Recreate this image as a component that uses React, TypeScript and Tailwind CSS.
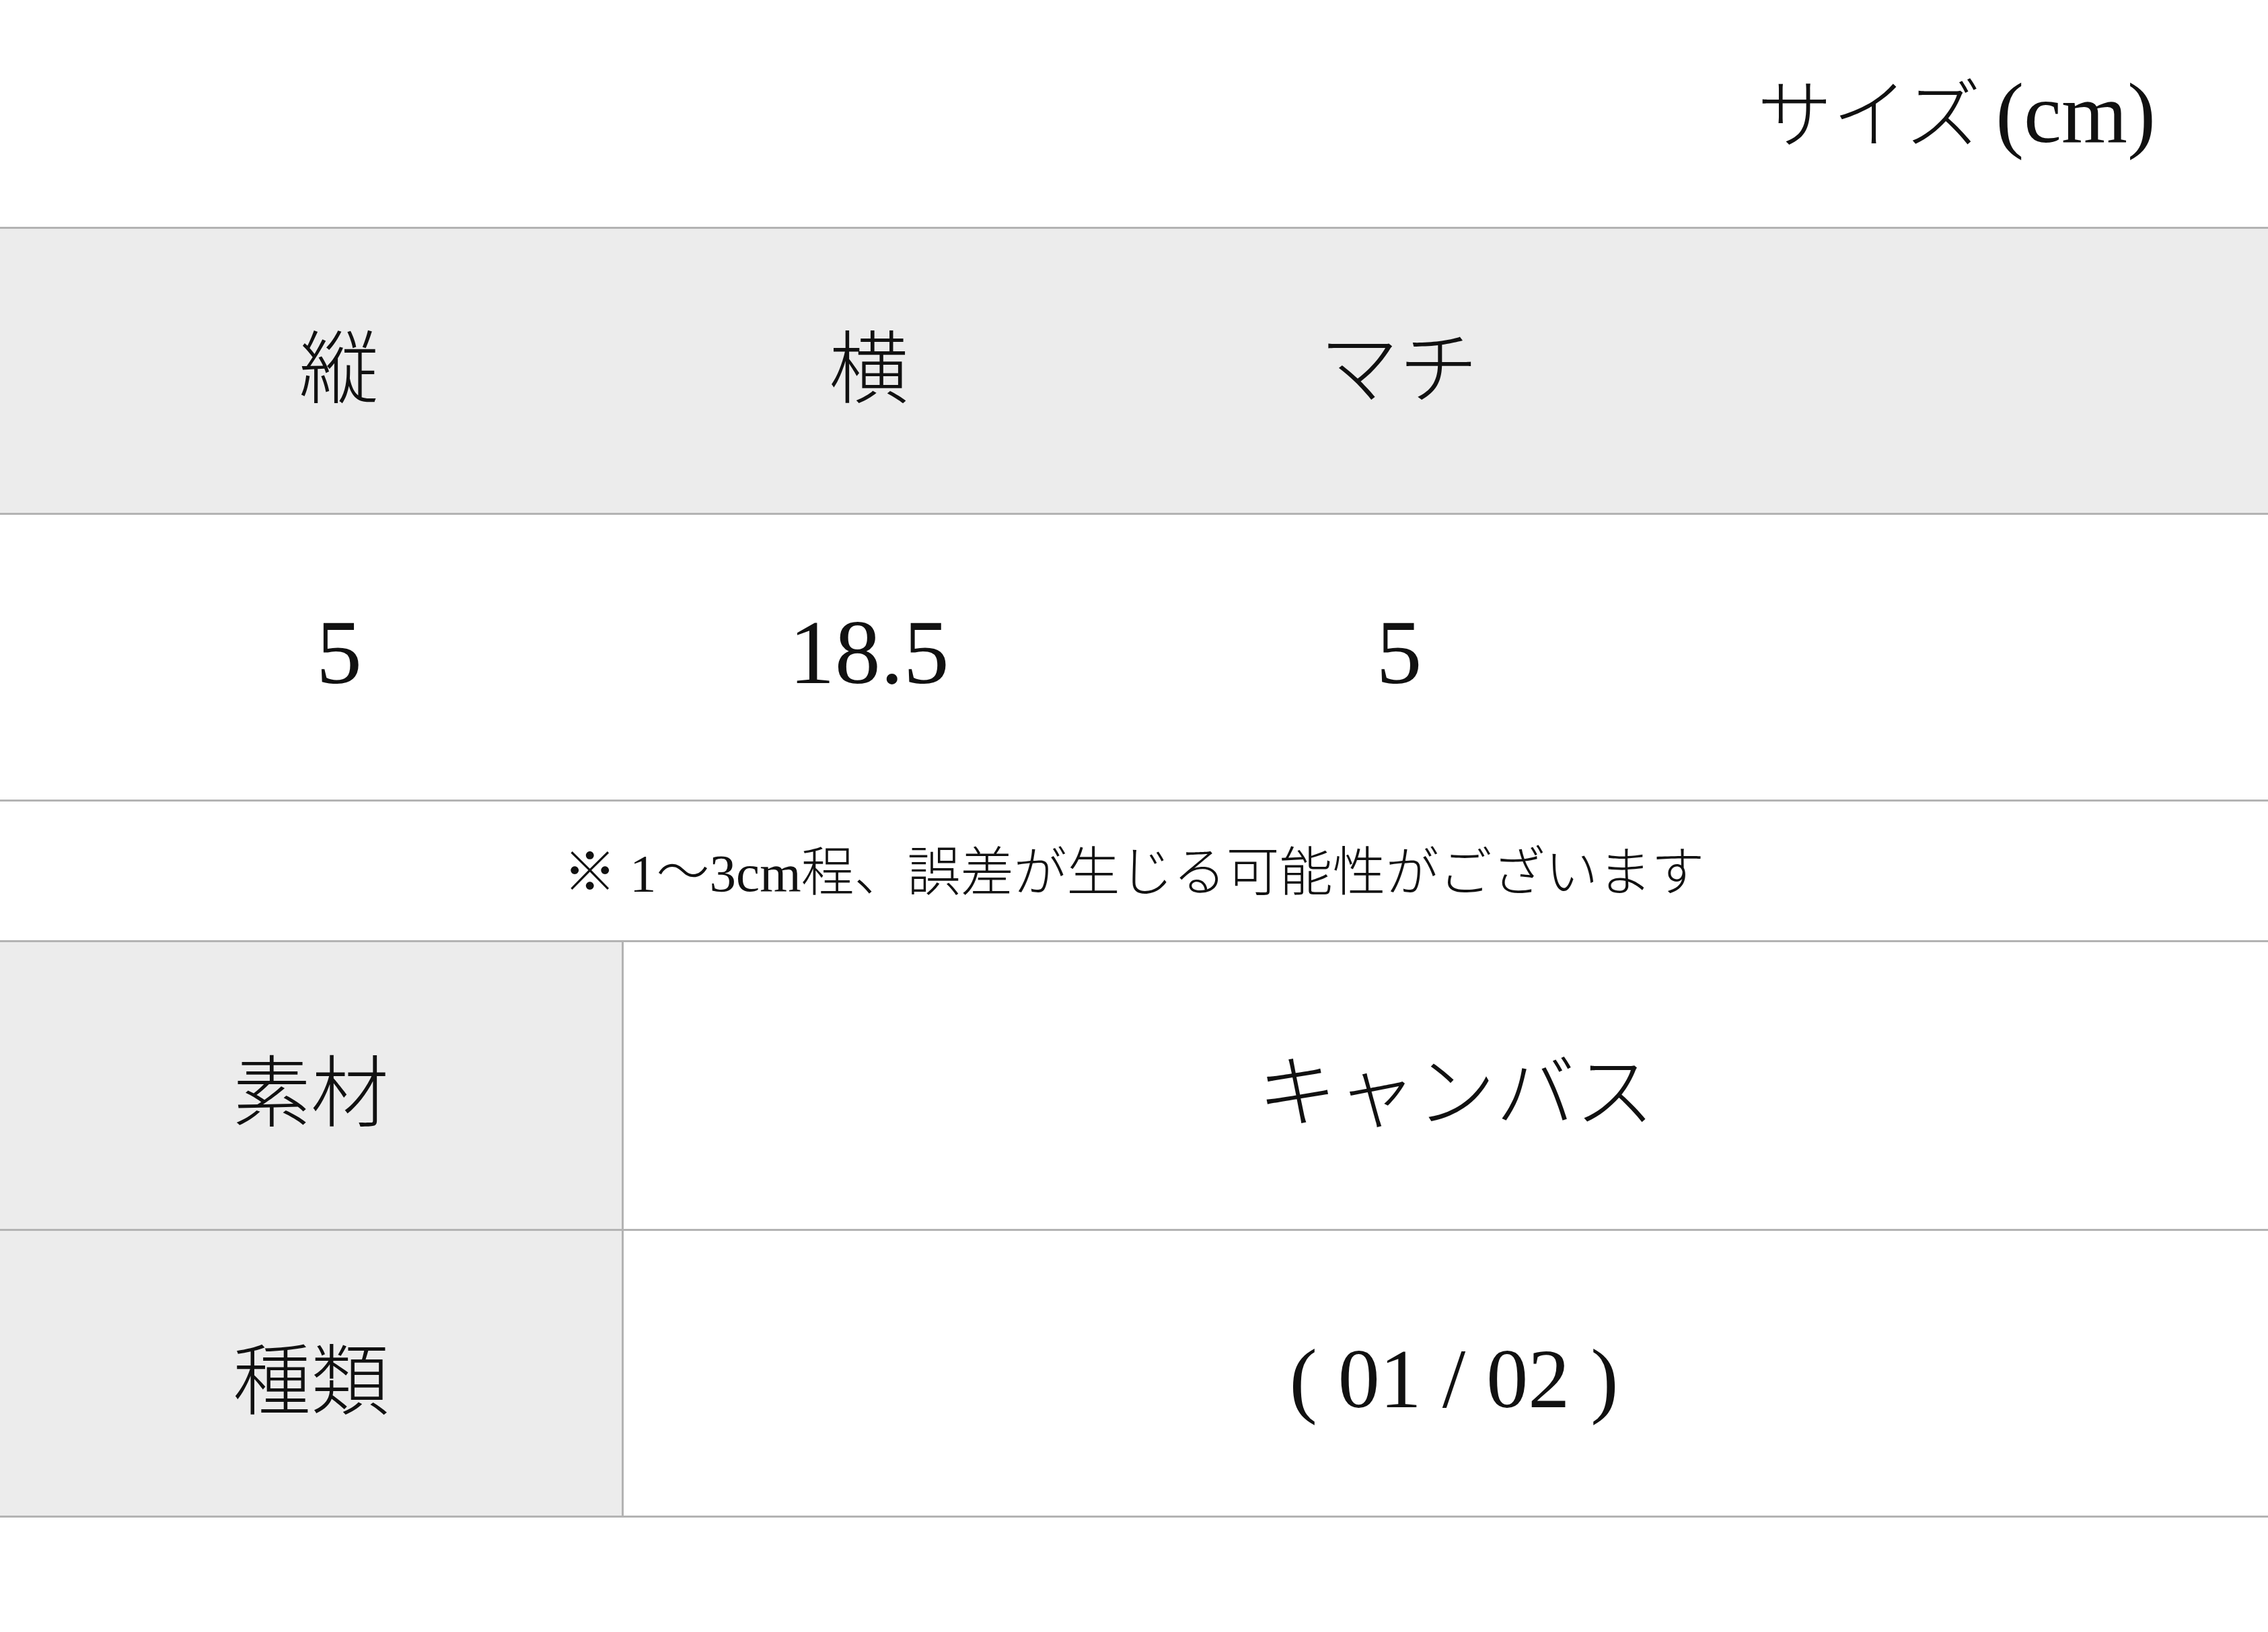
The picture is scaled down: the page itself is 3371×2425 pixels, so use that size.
const serif = "font-['Liberation_Serif','Noto_Sans_CJK_JP',serif]";

const headers = ["縦", "横", "マチ", ""];
const values = ["5", "18.5", "5", ""];

export default function App() {
  return (
    <div className={`w-[3371px] h-[2425px] bg-white text-[#111] ${serif}`}>
      {/* title */}
      <div className="h-[337px] flex items-center justify-end pr-[167px]">
        <span className="leading-none flex items-baseline gap-[22px]">
          <span className="text-[112px] font-light">サイズ</span>
          <span className="text-[126px]">(cm)</span>
        </span>
      </div>

      {/* size table */}
      <div className="border-t-[3px] border-[#b3b3b3] bg-[#ececec] h-[425px] grid grid-cols-4 px-[110px] items-center">
        {headers.map((h, i) => (
          <div key={i} className="text-center text-[118px] leading-none font-light">
            {h}
          </div>
        ))}
      </div>
      <div className="border-t-[3px] border-[#b3b3b3] h-[426px] grid grid-cols-4 px-[110px] items-center pb-[16px]">
        {values.map((v, i) => (
          <div key={i} className="text-center text-[136px] leading-none">
            {v}
          </div>
        ))}
      </div>
      <div className="border-t-[3px] border-[#b3b3b3] h-[209px] flex items-center justify-center pt-[6px]">
        <span className="text-[79px] leading-none font-light">
          ※ 1〜3cm程、誤差が生じる可能性がございます
        </span>
      </div>

      {/* detail table */}
      <div className="border-t-[3px] border-b-[3px] border-[#b3b3b3]">
        <div className="flex h-[426px]">
          <div className="w-[927px] bg-[#ececec] border-r-[3px] border-[#b3b3b3] flex items-center justify-center pt-[26px] text-[116px] leading-none font-light">
            素材
          </div>
          <div className="flex-1 flex items-center justify-center pt-[26px] pl-[30px] text-[118px] leading-none font-light">
            キャンバス
          </div>
        </div>
        <div className="flex h-[426px] border-t-[3px] border-[#b3b3b3]">
          <div className="w-[927px] bg-[#ececec] border-r-[3px] border-[#b3b3b3] flex items-center justify-center pt-[26px] text-[116px] leading-none font-light">
            種類
          </div>
          <div className="flex-1 flex items-center justify-center pt-[18px] pl-[24px] text-[124px] leading-none">
            ( 01 / 02 )
          </div>
        </div>
      </div>
    </div>
  );
}
